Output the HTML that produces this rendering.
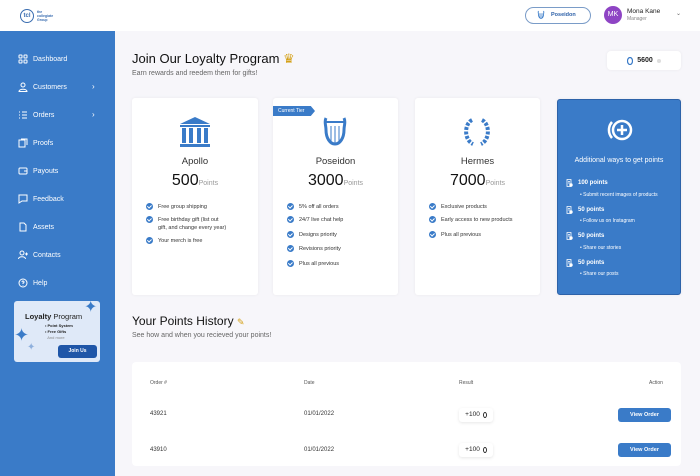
<!DOCTYPE html>
<html><head><style>
*{box-sizing:border-box;margin:0;padding:0}
body{width:700px;height:476px;overflow:hidden;font-family:"Liberation Sans",sans-serif;background:#f7f6fa;position:relative;color:#222}
.abs{position:absolute}
.hdr{left:0;top:0;width:700px;height:31px;background:#fff}
.side{left:0;top:31px;width:115px;height:445px;background:#3a7bc8}
.nav{position:absolute;left:18px;color:#fff;font-size:7px;display:flex;align-items:center}
.nav svg{width:10px;height:10px;margin-right:5px}
.card{position:absolute;top:98px;height:197px;background:#fff;border-radius:3px;box-shadow:0 0 3px rgba(0,0,0,.06)}
.tname{position:absolute;width:100%;text-align:center;top:58px;font-size:9.5px;color:#333}
.pts{position:absolute;width:100%;text-align:center;top:74px;font-size:16px;color:#111}
.pts span{font-size:7px;color:#999}
.li{position:absolute;left:14px;font-size:5.5px;color:#333;display:flex;line-height:8px}
.li i{display:inline-block;width:7px;height:7px;border-radius:50%;background:#3a7bc8;margin-right:5px;flex:none;position:relative}
.li i:after{content:"";position:absolute;left:2px;top:1.3px;width:1.5px;height:3px;border:solid #fff;border-width:0 1px 1px 0;transform:rotate(45deg)}
.bl{position:absolute;left:8px;color:#fff;font-size:6px;font-weight:bold;display:flex;align-items:center}
.bl svg{margin-right:5px}
.bs{position:absolute;left:22px;color:#fff;font-size:5px}
.th{position:absolute;font-size:5px;color:#555}
.td{position:absolute;font-size:6px;color:#333}
.btn{position:absolute;left:618px;width:53px;height:14px;background:#3a7bc8;color:#fff;font-size:5.5px;font-weight:bold;border-radius:3px;text-align:center;line-height:14px}
.res{position:absolute;left:459px;width:34px;height:14px;background:#fff;box-shadow:0 1px 3px rgba(0,0,0,.1);font-size:6.5px;line-height:14px;border-radius:3px;display:flex;align-items:center;justify-content:center;gap:3px}
</style></head><body>
<div class="abs hdr"></div>
<div class="abs" style="left:20px;top:9px;width:14px;height:14px;border:1px solid #3a6db0;border-radius:50%;font-size:6px;color:#3a6db0;font-weight:bold;text-align:center;line-height:12px">tcl</div>
<div class="abs" style="left:37px;top:10px;font-size:3.5px;color:#3a6db0;font-weight:bold;line-height:4px">the<br>collegiate<br>Group</div>
<div class="abs" style="left:525px;top:7px;width:66px;height:17px;border:1px solid #7a9cc8;border-radius:9px;font-size:5.5px;color:#2d60a8;font-weight:bold;line-height:15px;padding-left:25px">Poseidon</div>
<svg class="abs" style="left:537px;top:10px" width="8" height="10" viewBox="0 0 28 32" fill="none" stroke="#3a7bc8" stroke-width="3"><path d="M5 2c-2 4 0 7 0 12 0 8 4 14 9 14s9-6 9-14c0-5 2-8 0-12"/><path d="M10 10v16M14 10v18M18 10v16" stroke-width="2"/></svg>
<div class="abs" style="left:604px;top:6px;width:18px;height:18px;border-radius:50%;background:#8e44c4;color:#fff;font-size:7px;text-align:center;line-height:18px">MK</div>
<div class="abs" style="left:627px;top:8px;font-size:6.5px;color:#222">Mona Kane</div>
<div class="abs" style="left:627px;top:16px;font-size:5px;color:#888">Manager</div>
<div class="abs" style="left:676px;top:10px;font-size:6px;color:#666">⌄</div>

<div class="abs side"></div>
<div class="nav" style="top:54px"><svg viewBox="0 0 10 10" fill="none" stroke="#fff" stroke-width="1"><rect x="1" y="1" width="3" height="3" rx=".6"/><rect x="6" y="1" width="3" height="3" rx=".6"/><rect x="1" y="6" width="3" height="3" rx=".6"/><rect x="6" y="6" width="3" height="3" rx=".6"/></svg>Dashboard</div>
<div class="nav" style="top:82px"><svg viewBox="0 0 10 10" fill="none" stroke="#fff"><circle cx="5" cy="3" r="2"/><path d="M1 9.5c0-3 8-3 8 0z"/></svg>Customers</div>
<div class="nav" style="top:110px"><svg viewBox="0 0 10 10" fill="none" stroke="#fff"><path d="M1 2h1M4 2h5M1 5h1M4 5h5M1 8h1M4 8h5"/></svg>Orders</div>
<div class="nav" style="top:138px"><svg viewBox="0 0 10 10" fill="none" stroke="#fff"><rect x="1" y="2" width="6" height="7"/><path d="M3 1h6v6"/></svg>Proofs</div>
<div class="nav" style="top:166px"><svg viewBox="0 0 10 10" fill="none" stroke="#fff"><rect x="1" y="2" width="8" height="6" rx="1"/><path d="M6 5h3"/></svg>Payouts</div>
<div class="nav" style="top:194px"><svg viewBox="0 0 10 10" fill="none" stroke="#fff"><path d="M1 1h8v6H4L1 9z"/></svg>Feedback</div>
<div class="nav" style="top:222px"><svg viewBox="0 0 10 10" fill="none" stroke="#fff"><path d="M2 1h4l2 2v6H2z"/></svg>Assets</div>
<div class="nav" style="top:250px"><svg viewBox="0 0 10 10" fill="none" stroke="#fff"><circle cx="4" cy="3" r="2"/><path d="M0.5 9c0-3 7-3 7 0M7 4h3M8.5 2.5v3"/></svg>Contacts</div>
<div class="nav" style="top:278px"><svg viewBox="0 0 10 10" fill="none" stroke="#fff"><circle cx="5" cy="5" r="4"/><path d="M4 4a1 1 0 1 1 1 1v1M5 7.5v.5"/></svg>Help</div>
<div class="abs" style="left:92px;top:82px;color:#fff;font-size:8px">›</div>
<div class="abs" style="left:92px;top:110px;color:#fff;font-size:8px">›</div>

<div class="abs" style="left:14px;top:301px;width:86px;height:61px;background:#dfe9f8;border-radius:3px"></div>
<div class="abs" style="left:25px;top:312px;font-size:7.5px;color:#222"><b>Loyalty</b> Program</div>
<div class="abs" style="left:45px;top:323px;font-size:4px;color:#222;line-height:6px;font-weight:bold">• Point System<br>• Free Gifts<br><span style="font-weight:normal;color:#888">&nbsp;&nbsp;And more</span></div>
<div class="abs" style="left:58px;top:345px;width:39px;height:13px;background:#1f56a8;color:#fff;border-radius:3px;font-size:5px;font-weight:bold;text-align:center;line-height:13px">Join Us</div>
<div class="abs" style="left:84px;top:297px;color:#3a7bc8;font-size:16px">✦</div>
<div class="abs" style="left:14px;top:325px;color:#3a7bc8;font-size:18px">✦</div>
<div class="abs" style="left:27px;top:342px;color:#8fb0dd;font-size:10px">✦</div>

<div class="abs" style="left:132px;top:51px;font-size:13px;color:#111">Join Our Loyalty Program <span style="color:#d4a017">♛</span></div>
<div class="abs" style="left:132px;top:70px;font-size:7px;color:#666">Earn rewards and reedem them for gifts!</div>
<div class="abs" style="left:607px;top:51px;width:74px;height:19px;background:#fff;border-radius:4px;box-shadow:0 0 3px rgba(0,0,0,.06);font-size:7px;font-weight:bold;display:flex;align-items:center;justify-content:center;gap:4px"><svg width="6" height="8" viewBox="0 0 6 8"><ellipse cx="3" cy="4" rx="2.5" ry="3.5" fill="none" stroke="#3a7bc8" stroke-width="1.2"/></svg>5600<svg width="4" height="4"><circle cx="2" cy="2" r="2" fill="#ddd"/></svg></div>

<div class="card" style="left:132px;width:126px">
<svg class="abs" style="left:47px;top:18px" width="32" height="32" viewBox="0 0 32 32" fill="#3a7bc8"><path d="M16 1L1 8h30z"/><rect x="1" y="9" width="30" height="2"/><rect x="3" y="12" width="4" height="15"/><rect x="10" y="12" width="4" height="15"/><rect x="18" y="12" width="4" height="15"/><rect x="25" y="12" width="4" height="15"/><rect x="1" y="28" width="30" height="3"/></svg>
<div class="tname">Apollo</div><div class="pts">500<span>Points</span></div>
<div class="li" style="top:105px"><i></i>Free group shipping</div>
<div class="li" style="top:118px"><i></i>Free birthday gift (list out<br>gift, and change every year)</div>
<div class="li" style="top:139px"><i></i>Your merch is free</div>
</div>
<div class="card" style="left:273px;width:125px">
<svg class="abs" style="left:48px;top:18px" width="28" height="32" viewBox="0 0 28 32" fill="none" stroke="#3a7bc8" stroke-width="3"><path d="M5 2c-2 4 0 7 0 12 0 8 4 14 9 14s9-6 9-14c0-5 2-8 0-12"/><path d="M10 10v16M14 10v18M18 10v16" stroke-width="1"/><path d="M4 6h20" stroke-width="2"/></svg>
<div class="tname">Poseidon</div><div class="pts">3000<span>Points</span></div>
<div class="li" style="top:105px"><i></i>5% off all orders</div>
<div class="li" style="top:118px"><i></i>24/7 live chat help</div>
<div class="li" style="top:133px"><i></i>Designs priority</div>
<div class="li" style="top:147px"><i></i>Revisions priority</div>
<div class="li" style="top:162px"><i></i>Plus all previous</div>
</div>
<div class="abs" style="left:273px;top:106px;width:42px;height:10px;background:#3a7bc8;color:#fff;font-size:5px;line-height:10px;padding-left:5px;clip-path:polygon(0 0,90% 0,100% 50%,90% 100%,0 100%)">Current Tier</div>
<div class="card" style="left:415px;width:125px">
<svg class="abs" style="left:46px;top:20px" width="32" height="30" viewBox="0 0 32 30" fill="none" stroke="#3a7bc8" stroke-width="4" stroke-dasharray="3 1.5"><path d="M11 2C3 6 3 22 12 26M21 2c8 4 8 20-1 24"/></svg>
<div class="tname">Hermes</div><div class="pts">7000<span>Points</span></div>
<div class="li" style="top:105px"><i></i>Exclusive products</div>
<div class="li" style="top:118px"><i></i>Early access to new products</div>
<div class="li" style="top:133px"><i></i>Plus all previous</div>
</div>
<div class="card" style="left:557px;width:124px;top:99px;height:196px;background:#3a7bc8;border:1px solid #2d62a8">
<svg class="abs" style="left:48px;top:18px" width="28" height="24" viewBox="0 0 28 24" fill="none" stroke="#fff" stroke-width="2.5"><circle cx="16" cy="12" r="9"/><path d="M16 7v10M11 12h10M6 4a12 12 0 0 0 0 16"/></svg>
<div class="abs" style="width:100%;text-align:center;top:57px;font-size:7px;color:#fff">Additional ways to get points</div>
<div class="bl" style="top:79px"><svg width="7" height="8" viewBox="0 0 7 8" fill="none" stroke="#fff" stroke-width=".8"><path d="M1 .5h4v7H1zM2 2.5h2M2 4h2"/><circle cx="5" cy="6" r="1.3" fill="#fff"/></svg>100 points</div><div class="bs" style="top:92px">• Submit recent images of products</div>
<div class="bl" style="top:106px"><svg width="7" height="8" viewBox="0 0 7 8" fill="none" stroke="#fff" stroke-width=".8"><path d="M1 .5h4v7H1zM2 2.5h2M2 4h2"/><circle cx="5" cy="6" r="1.3" fill="#fff"/></svg>50 points</div><div class="bs" style="top:118px">• Follow us on Instagram</div>
<div class="bl" style="top:132px"><svg width="7" height="8" viewBox="0 0 7 8" fill="none" stroke="#fff" stroke-width=".8"><path d="M1 .5h4v7H1zM2 2.5h2M2 4h2"/><circle cx="5" cy="6" r="1.3" fill="#fff"/></svg>50 points</div><div class="bs" style="top:145px">• Share our stories</div>
<div class="bl" style="top:159px"><svg width="7" height="8" viewBox="0 0 7 8" fill="none" stroke="#fff" stroke-width=".8"><path d="M1 .5h4v7H1zM2 2.5h2M2 4h2"/><circle cx="5" cy="6" r="1.3" fill="#fff"/></svg>50 points</div><div class="bs" style="top:171px">• Share our posts</div>
</div>

<div class="abs" style="left:132px;top:314px;font-size:12px;color:#111">Your Points History <span style="color:#d4a017;font-size:9px">✎</span></div>
<div class="abs" style="left:132px;top:332px;font-size:7px;color:#666">See how and when you recieved your points!</div>
<div class="abs" style="left:132px;top:362px;width:549px;height:104px;background:#fff;border-radius:4px"></div>
<div class="th" style="left:150px;top:380px">Order #</div>
<div class="th" style="left:304px;top:380px">Date</div>
<div class="th" style="left:459px;top:380px">Result</div>
<div class="th" style="left:649px;top:380px">Action</div>
<div class="td" style="left:150px;top:411px">43921</div>
<div class="td" style="left:304px;top:411px">01/01/2022</div>
<div class="res" style="top:408px">+100<svg width="4" height="6" viewBox="0 0 4 6"><ellipse cx="2" cy="3" rx="1.5" ry="2.5" fill="none" stroke="#222" stroke-width=".9"/></svg></div>
<div class="btn" style="top:408px">View Order</div>
<div class="td" style="left:150px;top:447px">43910</div>
<div class="td" style="left:304px;top:447px">01/01/2022</div>
<div class="res" style="top:443px">+100<svg width="4" height="6" viewBox="0 0 4 6"><ellipse cx="2" cy="3" rx="1.5" ry="2.5" fill="none" stroke="#222" stroke-width=".9"/></svg></div>
<div class="btn" style="top:443px">View Order</div>
</body></html>
